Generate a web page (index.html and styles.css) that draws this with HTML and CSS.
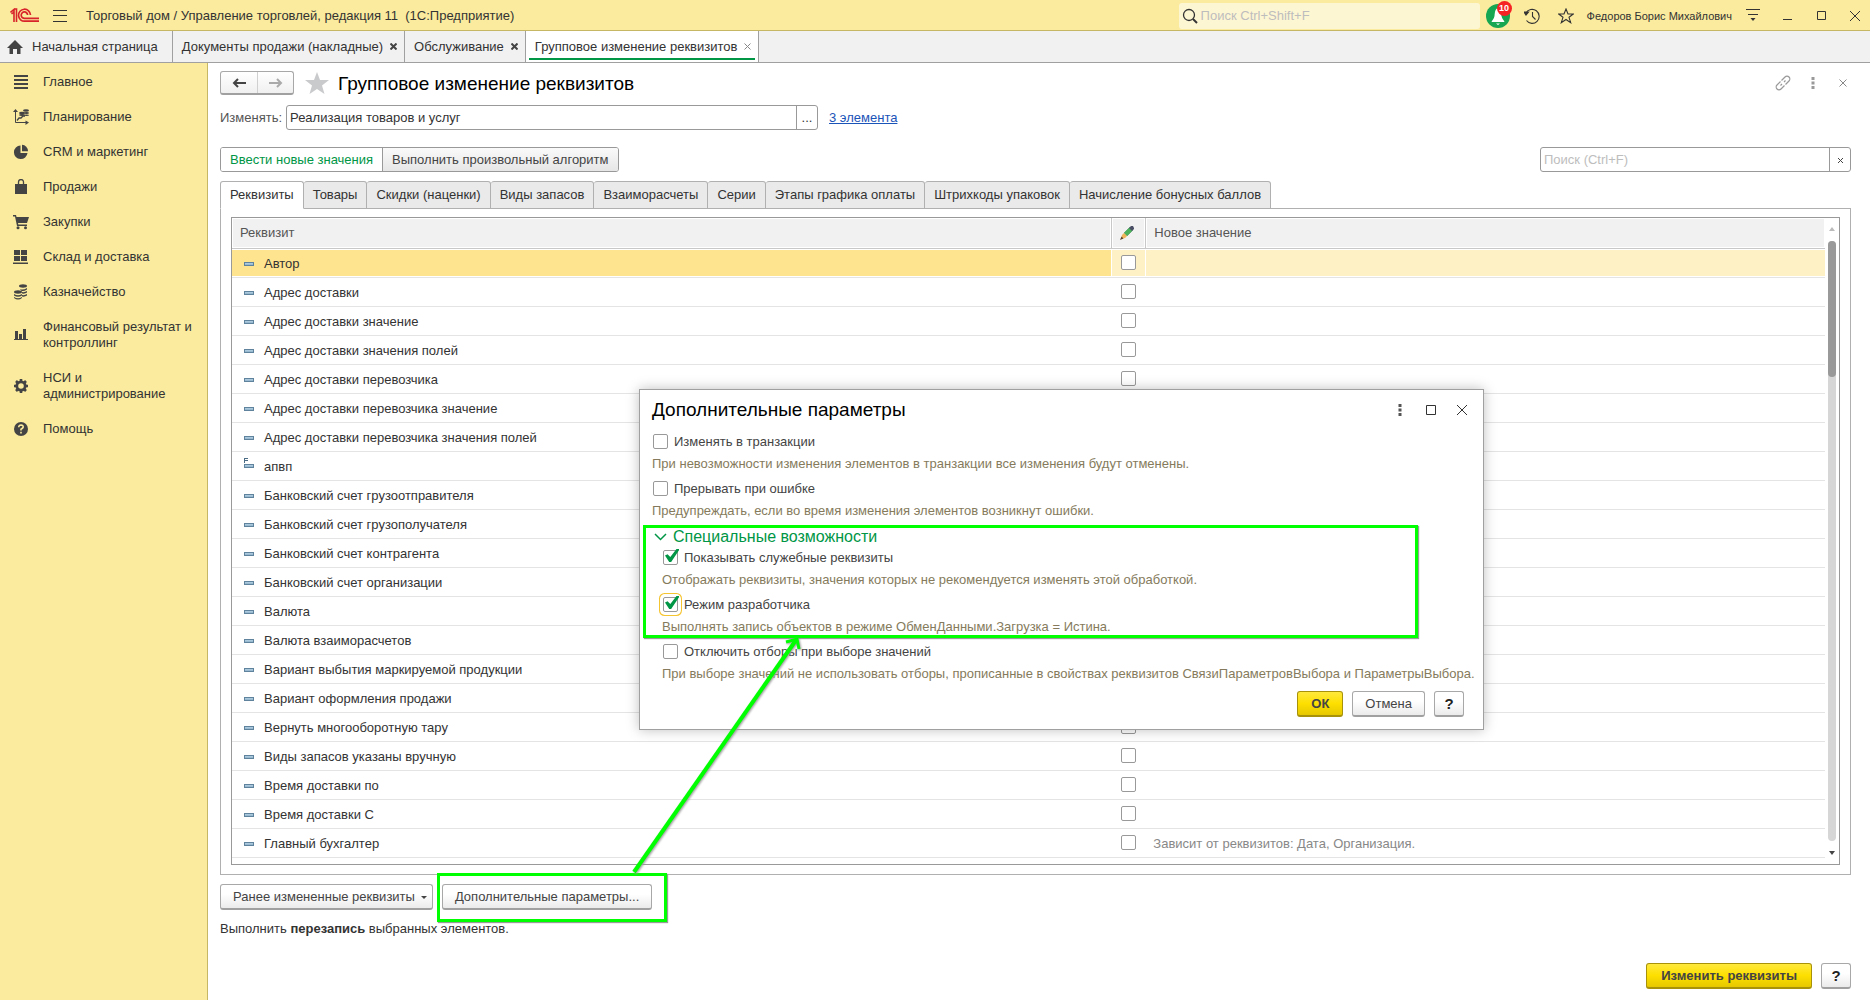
FILE: index.html
```
<!DOCTYPE html>
<html lang="ru">
<head>
    <meta charset="UTF-8">
    <meta name="viewport" content="width=device-width, initial-scale=1.0">
    <title>Групповое изменение реквизитов</title>
    <link rel="stylesheet" href="styles.css">
</head>
<body>
    <header class="topbar">
        <svg class="logo" width="30" height="15" viewBox="0 0 30 15" fill="none" stroke="#d8232a">
            <path d="M0.5 4.5L4 1.5V14M1.5 6L4 4M6.5 14V1H4" stroke-width="1.6"/>
            <path d="M20.5 7A6 6 0 1 0 15 13.2H29" stroke-width="1.7"/>
            <path d="M17.6 7A3.2 3.2 0 1 0 15 10.3H29" stroke-width="1.7"/>
        </svg>
        <button class="icon-btn menu-btn" aria-label="Меню">
            <svg width="14" height="12" viewBox="0 0 14 12" stroke="#333"><path d="M0 .5H14M0 5.5H14M0 11.5H14"/></svg>
        </button>
        <div class="app-title">Торговый дом / Управление торговлей, редакция 11&nbsp; (1С:Предприятие)</div>
        <label class="global-search">
            <svg width="16" height="16" viewBox="0 0 16 16" fill="none" stroke="#333"><circle cx="7" cy="7" r="5.5" stroke-width="1.3"/><path d="M11 11L15 15" stroke-width="2"/></svg>
            <input type="text" placeholder="Поиск Ctrl+Shift+F" aria-label="Поиск">
        </label>
        <button class="icon-btn bell" aria-label="Оповещения">
            <svg width="24" height="24" viewBox="0 0 24 24"><circle cx="12" cy="12" r="12" fill="#17a651"/><path d="M12 4C9 5 9 8 8.500 12C8 15 6 16 5.500 18H18.500C18 16 16 15 15.500 12C15 8 15 5 12 4ZM10 19.500H14L12 21Z" fill="#fff"/></svg>
            <span class="badge">10</span>
        </button>
        <button class="icon-btn history" aria-label="История">
            <svg width="16" height="16" viewBox="0 0 16 16" fill="none" stroke="#333" stroke-width="1.100"><path d="M2 5A7 7 0 1 1 2.500 12.500M8.500 4V8.500L11.500 11.500"/><path d="M0 4L2 7L4.500 4Z" fill="#333"/></svg>
        </button>
        <button class="icon-btn fav" aria-label="Избранное">
            <svg width="16" height="16" viewBox="0 0 16 16" fill="none" stroke="#333" stroke-width="1.100"><path d="M8 1L10 6H15.300L11 9.300L12.700 14.700L8 11.500L3.300 14.700L5 9.300L.7 6H6Z"/></svg>
        </button>
        <span class="user">Федоров Борис Михайлович</span>
        <button class="icon-btn win-menu" aria-label="Сервис">
            <svg width="14" height="13" viewBox="0 0 14 13"><path d="M0 .5H14M2 5.500H12" stroke="#333"/><path d="M4.500 9H9.500L7 12Z" fill="#333"/></svg>
        </button>
        <button class="icon-btn win-min" aria-label="Свернуть">
            <svg width="10" height="10" viewBox="0 0 10 10" stroke="#333"><path d="M0 8.500H9"/></svg>
        </button>
        <button class="icon-btn win-max" aria-label="Развернуть">
            <svg width="10" height="10" viewBox="0 0 10 10" stroke="#333" fill="none"><path d="M.5 .5H8.500V8.500H.5Z"/></svg>
        </button>
        <button class="icon-btn win-close" aria-label="Закрыть">
            <svg width="10" height="10" viewBox="0 0 10 10" stroke="#333"><path d="M0 0L10 10M10 0L0 10"/></svg>
        </button>
    </header>

    <nav class="window-tabs">
        <a class="window-tab home" href="#">
            <svg width="16" height="14" viewBox="0 0 16 14" fill="#444"><path d="M8 0L16 8H13.500V14H10V9H6V14H2.500V8H0Z"/></svg>
            Начальная страница
        </a>
        <a class="window-tab" href="#">Документы продажи (накладные) <svg class="x" viewBox="0 0 7 7"><path d="M.5 .5L6.500 6.500M6.500 .5L.5 6.500"/></svg></a>
        <a class="window-tab" href="#">Обслуживание <svg class="x" viewBox="0 0 7 7"><path d="M.5 .5L6.500 6.500M6.500 .5L.5 6.500"/></svg></a>
        <a class="window-tab active" href="#">Групповое изменение реквизитов <svg class="x" viewBox="0 0 7 7"><path d="M.5 .5L6.500 6.500M6.500 .5L.5 6.500"/></svg></a>
    </nav>

    <div class="workspace">
        <nav class="sidebar">
            <a href="#"><svg viewBox="0 0 16 16"><path d="M1 1H15V3H1ZM1 5H15V7H1ZM1 9H15V11H1ZM1 13H15V15H1Z"/></svg>Главное</a>
            <a href="#"><svg viewBox="0 0 16 16"><path d="M2.500 2V13.500H14" fill="none" stroke="#444"/><path d="M0 3L2.500 0L5 3ZM12.500 11.500L16 13.500L12.500 16Z"/><path d="M4 11.500L6 9H8L10 7H12" fill="none" stroke="#444" stroke-width="1.300"/><ellipse cx="9" cy="4" rx="3" ry="1.300"/><ellipse cx="9" cy="6" rx="3" ry="1"/><ellipse cx="13" cy="1.500" rx="3" ry="1.300"/><ellipse cx="13.500" cy="4" rx="2.500" ry="1"/><ellipse cx="13.500" cy="6.200" rx="2.500" ry=".8"/></svg>Планирование</a>
            <a href="#"><svg viewBox="0 0 16 16"><path d="M7.500 1.500A6.800 6.800 0 1 0 14.500 9H7.500ZM9 .8V7.200H15A6.500 6.500 0 0 0 9 .8Z"/></svg>CRM и маркетинг</a>
            <a href="#"><svg viewBox="0 0 16 16"><path d="M2 5H14V15H2Z"/><path d="M5.500 7V3A2.500 2.500 0 0 1 10.500 3V7" fill="none" stroke="#444" stroke-width="1.300"/></svg>Продажи</a>
            <a href="#"><svg viewBox="0 0 16 16"><path d="M0 1H3L3.500 3H16L14 9H5L5.300 10.500H14V12H4L2 2.500H0Z"/><circle cx="5" cy="13.700" r="1.500"/><circle cx="12.500" cy="13.700" r="1.500"/></svg>Закупки</a>
            <a href="#"><svg viewBox="0 0 16 16"><path d="M1 1H7V6H1ZM8 1H14V6H8ZM1 7H7V12H1ZM8 7H14V12H8ZM0 13.500H15V15H0Z"/></svg>Склад и доставка</a>
            <a href="#"><svg viewBox="0 0 16 16"><ellipse cx="10" cy="2" rx="4" ry="1.700"/><path d="M7 5Q10 6.500 14 4V5.500Q10 8 8 6.500ZM9 8Q12 8.500 14 7V8.500Q12 10 9 9.500ZM9 11Q12 11.500 14 10V11.500Q12 13 9 12.500Z"/><ellipse cx="5" cy="8" rx="4" ry="1.700"/><path d="M1 10Q5 12.500 9 10V11.500Q5 14 1 11.500ZM1 13Q5 15.500 9 13V14Q5 17 1 14Z"/></svg>Казначейство</a>
            <a href="#"><svg viewBox="0 0 16 16"><path d="M2 4H5V12H2ZM6 7H9V12H6ZM10 2H13V12H10ZM1 12H15V13H1Z"/></svg>Финансовый результат и контроллинг</a>
            <a href="#"><svg viewBox="0 0 16 16"><circle cx="8" cy="8" r="4.200" fill="none" stroke="#444" stroke-width="2.800"/><path d="M8 1V4M8 12V15M1 8H4M12 8H15M3 3L5 5M11 11L13 13M13 3L11 5M5 11L3 13" stroke="#444" stroke-width="2.600"/></svg>НСИ и администрирование</a>
            <a href="#"><svg viewBox="0 0 16 16"><circle cx="8" cy="8" r="7"/><path d="M5.700 6.200Q5.900 4 8.100 4Q10.300 4.100 10.200 6Q10 7.200 8 8.200V9.500M8 10.800V12.500" fill="none" stroke="#faeb9e" stroke-width="1.600"/></svg>Помощь</a>
        </nav>

        <main class="form">
            <div class="form-head">
                <div class="nav-buttons">
                    <button aria-label="Назад"><svg width="15" height="12" viewBox="0 0 15 12" stroke="#444" stroke-width="2" fill="none"><path d="M14 6H2M6 2L2 6L6 10"/></svg></button>
                    <button aria-label="Вперед"><svg width="15" height="12" viewBox="0 0 15 12" stroke="#aaa" stroke-width="2" fill="none"><path d="M1 6H13M9 2L13 6L9 10"/></svg></button>
                </div>
                <svg class="star" width="24" height="22" viewBox="0 0 24 22"><path d="M12 0L15 8H24L17 13.500L19.500 22L12 17L4.500 22L7 13.500L0 8H9Z" fill="#c9cacc"/></svg>
                <h1>Групповое изменение реквизитов</h1>
                <div class="form-tools">
                    <button class="icon-btn" aria-label="Ссылка"><svg width="16" height="16" viewBox="0 0 16 16" fill="none" stroke="#999" stroke-width="1.200"><path d="M6.500 5.500L10 2A2.600 2.600 0 0 1 14 6L10.500 9.500M9.500 10.500L6 14A2.600 2.600 0 0 1 2 10L5.500 6.500M5.500 10.500L7 9M9 7L10.500 5.500"/></svg></button>
                    <button class="icon-btn" aria-label="Еще"><svg width="4" height="12" viewBox="0 0 4 12" fill="#999"><path d="M.5 0H3.500V3H.5ZM.5 4.500H3.500V7.500H.5ZM.5 9H3.500V12H.5Z"/></svg></button>
                    <button class="icon-btn" aria-label="Закрыть форму"><svg width="8" height="8" viewBox="0 0 8 8" stroke="#888"><path d="M.5 .5L7.500 7.500M7.500 .5L.5 7.500"/></svg></button>
                </div>
            </div>

            <div class="subject">
                <label for="subject">Изменять:</label>
                <div class="field">
                    <input type="text" id="subject" value="Реализация товаров и услуг">
                    <button aria-label="Выбрать">...</button>
                </div>
                <a href="#">3 элемента</a>
            </div>

            <div class="mode-row">
                <div class="switch">
                    <button class="on">Ввести новые значения</button>
                    <button>Выполнить произвольный алгоритм</button>
                </div>
                <div class="field search">
                    <input type="text" placeholder="Поиск (Ctrl+F)" aria-label="Поиск по реквизитам">
                    <button aria-label="Очистить"><svg class="x" viewBox="0 0 7 7"><path d="M1 1L6 6M6 1L1 6"/></svg></button>
                </div>
            </div>

            <div class="tabs">
                <button class="on">Реквизиты</button>
                <button>Товары</button>
                <button>Скидки (наценки)</button>
                <button>Виды запасов</button>
                <button>Взаиморасчеты</button>
                <button>Серии</button>
                <button>Этапы графика оплаты</button>
                <button>Штрихкоды упаковок</button>
                <button>Начисление бонусных баллов</button>
            </div>

            <div class="panel">
                <div class="grid-frame">
                    <table class="attrs">
                        <thead>
                            <tr>
                                <th class="col-name">Реквизит</th>
                                <th class="col-check"><svg width="14" height="14" viewBox="0 0 14 14"><path d="M4 7L9.500 1.500L12.500 4.500L7 10Z" fill="#4cb35c" stroke="#2f8a46" stroke-width=".5"/><path d="M9 2L11 0H13L14 2V3L12 5Z" fill="#4a4f66"/><path d="M4 7L7 10L5 12L1 13L2 9Z" fill="#f0b45a"/><path d="M0 14L1.500 10.500L3.500 12.500Z" fill="#5b4330"/></svg></th>
                                <th>Новое значение</th>
                            </tr>
                        </thead>
                        <tbody>
                            <tr class="selected"><td>Автор</td><td><input type="checkbox" aria-label="Автор"></td><td></td></tr>
                            <tr><td>Адрес доставки</td><td><input type="checkbox" aria-label="Адрес доставки"></td><td></td></tr>
                            <tr><td>Адрес доставки значение</td><td><input type="checkbox" aria-label="Адрес доставки значение"></td><td></td></tr>
                            <tr><td>Адрес доставки значения полей</td><td><input type="checkbox" aria-label="Адрес доставки значения полей"></td><td></td></tr>
                            <tr><td>Адрес доставки перевозчика</td><td><input type="checkbox" aria-label="Адрес доставки перевозчика"></td><td></td></tr>
                            <tr><td>Адрес доставки перевозчика значение</td><td><input type="checkbox" aria-label="Адрес доставки перевозчика значение"></td><td></td></tr>
                            <tr><td>Адрес доставки перевозчика значения полей</td><td><input type="checkbox" aria-label="Адрес доставки перевозчика значения полей"></td><td></td></tr>
                            <tr class="extra"><td>апвп</td><td><input type="checkbox" aria-label="апвп"></td><td></td></tr>
                            <tr><td>Банковский счет грузоотправителя</td><td><input type="checkbox" aria-label="Банковский счет грузоотправителя"></td><td></td></tr>
                            <tr><td>Банковский счет грузополучателя</td><td><input type="checkbox" aria-label="Банковский счет грузополучателя"></td><td></td></tr>
                            <tr><td>Банковский счет контрагента</td><td><input type="checkbox" aria-label="Банковский счет контрагента"></td><td></td></tr>
                            <tr><td>Банковский счет организации</td><td><input type="checkbox" aria-label="Банковский счет организации"></td><td></td></tr>
                            <tr><td>Валюта</td><td><input type="checkbox" aria-label="Валюта"></td><td></td></tr>
                            <tr><td>Валюта взаиморасчетов</td><td><input type="checkbox" aria-label="Валюта взаиморасчетов"></td><td></td></tr>
                            <tr><td>Вариант выбытия маркируемой продукции</td><td><input type="checkbox" aria-label="Вариант выбытия маркируемой продукции"></td><td></td></tr>
                            <tr><td>Вариант оформления продажи</td><td><input type="checkbox" aria-label="Вариант оформления продажи"></td><td></td></tr>
                            <tr><td>Вернуть многооборотную тару</td><td><input type="checkbox" aria-label="Вернуть многооборотную тару"></td><td></td></tr>
                            <tr><td>Виды запасов указаны вручную</td><td><input type="checkbox" aria-label="Виды запасов указаны вручную"></td><td></td></tr>
                            <tr><td>Время доставки по</td><td><input type="checkbox" aria-label="Время доставки по"></td><td></td></tr>
                            <tr><td>Время доставки С</td><td><input type="checkbox" aria-label="Время доставки С"></td><td></td></tr>
                            <tr><td>Главный бухгалтер</td><td><input type="checkbox" aria-label="Главный бухгалтер"></td><td class="depends">Зависит от реквизитов: Дата, Организация.</td></tr>
                        </tbody>
                    </table>
                    <div class="scrollbar">
                        <div class="arrow up"></div>
                        <div class="track"><div class="thumb"></div></div>
                        <div class="arrow down"></div>
                    </div>
                </div>
            </div>

            <div class="actions">
                <button class="btn dropdown">Ранее измененные реквизиты</button>
                <div class="highlighted">
                    <button class="btn">Дополнительные параметры...</button>
                </div>
            </div>
            <p class="note">Выполнить <b>перезапись</b> выбранных элементов.</p>

            <footer class="form-footer">
                <button class="btn primary">Изменить реквизиты</button>
                <button class="btn help">?</button>
            </footer>
        </main>
    </div>

    <section class="dialog" role="dialog" aria-labelledby="dialog-title">
        <div class="dialog-head">
            <h2 id="dialog-title">Дополнительные параметры</h2>
            <button class="icon-btn" aria-label="Еще"><svg width="4" height="12" viewBox="0 0 4 12" fill="#555"><path d="M.5 0H3.500V3H.5ZM.5 4.500H3.500V7.500H.5ZM.5 9H3.500V12H.5Z"/></svg></button>
            <button class="icon-btn" aria-label="Развернуть"><svg width="10" height="10" viewBox="0 0 10 10" stroke="#333" fill="none"><path d="M.5 .5H9.500V9.500H.5Z"/></svg></button>
            <button class="icon-btn" aria-label="Закрыть"><svg width="12" height="12" viewBox="0 0 12 12" stroke="#333"><path d="M1 1L11 11M11 1L1 11"/></svg></button>
        </div>
        <label class="option"><input type="checkbox">Изменять в транзакции</label>
        <p class="hint">При невозможности изменения элементов в транзакции все изменения будут отменены.</p>
        <label class="option"><input type="checkbox">Прерывать при ошибке</label>
        <p class="hint">Предупреждать, если во время изменения элементов возникнут ошибки.</p>
        <button class="group-title">
            <svg width="13" height="8" viewBox="0 0 13 8" fill="none" stroke="#009646" stroke-width="1.500"><path d="M1 1L6.500 6.500L12 1"/></svg>
            Специальные возможности
        </button>
        <div class="group">
            <label class="option"><input type="checkbox" checked>Показывать служебные реквизиты</label>
            <p class="hint">Отображать реквизиты, значения которых не рекомендуется изменять этой обработкой.</p>
            <label class="option"><input type="checkbox" class="focused" checked>Режим разработчика</label>
            <p class="hint">Выполнять запись объектов в режиме ОбменДанными.Загрузка = Истина.</p>
            <label class="option"><input type="checkbox">Отключить отборы при выборе значений</label>
            <p class="hint">При выборе значений не использовать отборы, прописанные в свойствах реквизитов СвязиПараметровВыбора и ПараметрыВыбора.</p>
        </div>
        <div class="dialog-buttons">
            <button class="btn primary">ОК</button>
            <button class="btn">Отмена</button>
            <button class="btn help">?</button>
        </div>
        <div class="group-mark"></div>
    </section>

    <svg class="pointer" width="170" height="240" viewBox="0 0 170 240" fill="none" stroke="#00ff00" stroke-width="3">
        <path d="M3 235L165 3" stroke-width="4"/>
        <path d="M155 5L166 2L168 12"/>
    </svg>
</body>
</html>
```
FILE: styles.css
```
* {
    box-sizing: border-box;
}
body {
    font-family: "Liberation Sans", Arial, sans-serif;
    font-size: 13px;
    line-height: 16px;
    color: #333;
    background-color: #fff;
    margin: 0;
    min-height: 100vh;
    display: flex;
    flex-direction: column;
    position: relative;
}
button, input {
    font: inherit;
    color: inherit;
    margin: 0;
}
button {
    cursor: pointer;
}
a {
    color: inherit;
    text-decoration: none;
}
h1, h2, p {
    margin: 0;
}
h1, h2 {
    font-size: 19px;
    line-height: 24px;
    font-weight: normal;
    color: #000;
}
svg {
    flex: none;
}
.icon-btn {
    display: flex;
    align-items: center;
    justify-content: center;
    background: none;
    border: none;
    padding: 0;
}
.x {
    width: 7px;
    height: 7px;
    stroke: #444;
    stroke-width: 2;
}

/* top bar */
.topbar {
    display: flex;
    align-items: center;
    height: 31px;
    padding: 1px 10px 0;
    background-color: #faeb9e;
    border-bottom: 1px solid #c5b763;
}
.menu-btn {
    margin: 0 19px 0 13px;
}
.app-title {
    flex: 1;
}
.global-search {
    display: flex;
    align-items: center;
    gap: 3px;
    width: 301px;
    height: 26px;
    padding-left: 3px;
    background-color: #fdf6d3;
    border-radius: 3px;
}
.global-search input {
    flex: 1;
    background: none;
    border: none;
    outline: none;
    padding: 0;
}
::placeholder {
    color: #bdbdbd;
    opacity: 1;
}
.bell {
    position: relative;
    margin: 0 14px 0 6px;
}
.badge {
    position: absolute;
    top: -3px;
    right: -2px;
    width: 15px;
    height: 15px;
    border-radius: 50%;
    background-color: #f52323;
    color: #fff;
    font-size: 9px;
    line-height: 15px;
    font-weight: bold;
    text-align: center;
}
.history {
    margin-right: 18px;
}
.user {
    font-size: 11px;
    margin: 0 14px 0 13px;
}
.win-min {
    margin: 0 24px 0 23px;
}
.win-close {
    margin-left: 23px;
}

/* open windows */
.window-tabs {
    display: flex;
    height: 32px;
    background-color: #f1f1f1;
    border-bottom: 1px solid #a0a0a0;
}
.window-tab {
    display: flex;
    align-items: center;
    gap: 7px;
    padding: 0 7px 0 9px;
    border-right: 1px solid #a0a0a0;
}
.window-tab.home {
    gap: 9px;
    padding: 0 14px 0 7px;
}
.window-tab.active {
    position: relative;
    background-color: #fff;
}
.window-tab.active::after {
    content: "";
    position: absolute;
    left: 3px;
    right: 3px;
    bottom: 2px;
    height: 2px;
    background-color: #009646;
}
.window-tab.active .x {
    stroke: #888;
    stroke-width: 1;
}

/* sections */
.workspace {
    flex: 1;
    display: flex;
}
.sidebar {
    flex: none;
    width: 208px;
    padding-top: 2px;
    background-color: #faeb9e;
    border-right: 1px solid #c5b763;
}
.sidebar a {
    display: flex;
    align-items: center;
    gap: 14px;
    padding: 9px 10px 10px 13px;
}
.sidebar svg {
    width: 16px;
    height: 16px;
    fill: #444;
}

/* form */
.form {
    flex: 1;
    min-width: 0;
    display: flex;
    flex-direction: column;
    padding: 8px 19px 11px 12px;
}
.form-head {
    display: flex;
    align-items: center;
    height: 24px;
}
.form-head h1 {
    padding-top: 2px;
}
.nav-buttons {
    display: flex;
    border: 1px solid #a8a8a8;
    border-bottom: 2px solid #a0a0a0;
    border-radius: 3px;
    background: linear-gradient(#fff, #f0f0f0);
}
.nav-buttons button {
    width: 36px;
    height: 21px;
    padding: 0;
    border: none;
    background: none;
    display: flex;
    align-items: center;
    justify-content: center;
}
.nav-buttons button + button {
    border-left: 1px solid #d0d0d0;
}
.star {
    margin: 0 9px 0 11px;
}
.form-tools {
    display: flex;
    align-items: center;
    gap: 14px;
    margin-left: auto;
}
.form-tools .icon-btn {
    width: 16px;
}
.subject {
    display: flex;
    align-items: center;
    margin-top: 10px;
}
.subject label {
    color: #555;
    margin-right: 4px;
}
.subject a {
    margin-left: 11px;
    color: #1b54b8;
    text-decoration: underline;
}
.field {
    display: flex;
    width: 532px;
    height: 25px;
    border: 1px solid #999;
    border-radius: 3px;
    background-color: #fff;
}
.field input {
    flex: 1;
    min-width: 0;
    border: none;
    outline: none;
    background: none;
    padding: 0 3px;
}
.field button {
    width: 21px;
    padding: 0;
    border: none;
    border-left: 1px solid #999;
    background: none;
}
.field .x {
    stroke-width: 1;
}
.field.search {
    width: 311px;
}
.mode-row {
    display: flex;
    justify-content: space-between;
    margin-top: 17px;
}
.switch {
    display: flex;
    height: 25px;
    border: 1px solid #999;
    border-radius: 3px;
    overflow: hidden;
}
.switch button {
    padding: 0 9px;
    border: none;
    color: #444;
    background: linear-gradient(#fafafa, #e6e6e6);
}
.switch button + button {
    border-left: 1px solid #999;
}
.switch .on {
    color: #009646;
    background: #fff;
}

/* pages */
.tabs {
    position: relative;
    display: flex;
    margin-top: 9px;
    margin-bottom: -1px;
}
.tabs button {
    height: 28px;
    padding: 0 9px;
    border: 1px solid #b0b0b0;
    border-left: none;
    border-radius: 3px 3px 0 0;
    background-color: #eaeaea;
}
.tabs .on {
    border-left: 1px solid #b0b0b0;
    border-bottom-color: #fff;
    background-color: #fff;
}
.panel {
    padding: 8px 10px 9px;
    border: 1px solid #b0b0b0;
}
.grid-frame {
    display: flex;
    padding-bottom: 6px;
    border: 1px solid #999;
}
.attrs {
    flex: 1;
    table-layout: fixed;
    border-collapse: separate;
    border-spacing: 0;
}
.attrs th {
    height: 31px;
    padding: 0 8px;
    text-align: left;
    font-weight: normal;
    color: #555;
    background-color: #f1f1f1;
    border-bottom: 1px solid #c8c8c8;
    box-shadow: inset 0 0 0 1px #fff;
}
.attrs th + th {
    border-left: 1px solid #c8c8c8;
}
.attrs .col-name {
    width: 55.2%;
}
.attrs .col-check {
    width: 34px;
}
.attrs th svg, .attrs input {
    display: block;
}
.attrs td {
    height: 29px;
    padding: 1px 8px 0;
    border-bottom: 1px solid #e4e4e4;
}
.attrs td:first-child {
    padding-left: 32px;
    background:
        linear-gradient(#b4d0e2, #8fb2c9) 13px 14px / 8px 2px no-repeat,
        linear-gradient(#5f829d, #5f829d) 12px 13px / 10px 4px no-repeat;
}
.attrs .extra td:first-child {
    background:
        linear-gradient(#4c6b85, #4c6b85) 12px 6px / 4px 1px no-repeat,
        linear-gradient(#4c6b85, #4c6b85) 12px 6px / 1px 5px no-repeat,
        linear-gradient(#4c6b85, #4c6b85) 12px 8px / 4px 1px no-repeat,
        linear-gradient(#b4d0e2, #8fb2c9) 13px 13px / 8px 2px no-repeat,
        linear-gradient(#5f829d, #5f829d) 12px 12px / 10px 4px no-repeat;
}
.attrs td:nth-child(2) {
    padding: 0 8px 2px 10px;
}
.attrs .selected td {
    background-color: #fdf1c5;
    box-shadow: inset 0 1px #fff, inset 1px 0 #fff, inset 0 -1px #fff;
}
.attrs .selected td:first-child {
    background-color: #ffe48f;
    box-shadow: inset 0 1px #fff, inset 0 -1px #fff;
}
.attrs .depends {
    color: #888;
}
.scrollbar {
    width: 14px;
    display: flex;
    flex-direction: column;
    align-items: center;
    gap: 10px;
    padding: 9px 0 3px;
}
.arrow {
    border: 3px solid transparent;
}
.arrow.up {
    border-top: none;
    border-bottom: 4px solid #bbb;
}
.arrow.down {
    border-bottom: none;
    border-top: 4px solid #444;
}
.track {
    flex: 1;
    width: 8px;
    border-radius: 4px;
    background-color: #d6d6d6;
}
.thumb {
    height: 136px;
    border-radius: 4px;
    background-color: #999;
}

/* check boxes */
input[type="checkbox"] {
    appearance: none;
    position: relative;
    flex: none;
    width: 15px;
    height: 15px;
    border: 1px solid #999;
    border-radius: 2px;
    background-color: #fff;
}
input[type="checkbox"]:checked::after {
    content: "";
    position: absolute;
    left: 1px;
    top: -2px;
    width: 14px;
    height: 13px;
    background-color: #009646;
    clip-path: polygon(0 50%, 18% 40%, 38% 62%, 82% 0, 100% 0, 100% 10%, 44% 100%, 30% 100%);
}
input.focused {
    box-shadow: 0 0 0 3px #fff, 0 0 0 4px #f5c431;
}

/* buttons */
.btn {
    height: 26px;
    padding: 1px 12px 0;
    color: #444;
    border: 1px solid #a8a8a8;
    border-bottom: 2px solid #a0a0a0;
    border-radius: 3px;
    background: linear-gradient(#fff 40%, #ebebeb);
}
.btn.primary {
    padding: 0 13px;
    font-weight: bold;
    border-color: #a8920a;
    background: linear-gradient(#ffe93d, #fddf00 50%, #e6c800);
}
.btn.help {
    width: 30px;
    padding: 0;
    font-size: 15px;
    font-weight: bold;
    color: #222;
}
.btn.dropdown {
    display: flex;
    align-items: center;
    gap: 6px;
    padding-right: 5px;
}
.btn.dropdown::after {
    content: "";
    border: 3px solid transparent;
    border-top-color: #444;
    border-bottom: none;
}
.actions {
    display: flex;
    gap: 9px;
    margin-top: 9px;
}
.highlighted {
    position: relative;
}
.highlighted::after {
    content: "";
    position: absolute;
    inset: -11px -15px -12px -5px;
    border: 3px solid #00ff00;
    box-shadow: 1px 1px 1px #999;
    pointer-events: none;
}
.note {
    margin-top: 11px;
}
.form-footer {
    display: flex;
    justify-content: flex-end;
    gap: 9px;
    margin-top: auto;
}
.form-footer .primary {
    padding: 0 14px;
}

/* dialog */
.dialog {
    position: absolute;
    left: 639px;
    top: 389px;
    width: 845px;
    padding: 8px 12px 12px;
    background-color: #fff;
    border: 1px solid #a0a0a0;
    box-shadow: 0 0 12px rgba(0, 0, 0, 0.25);
}
.dialog-head {
    display: flex;
    align-items: center;
    gap: 13px;
    margin-bottom: 10px;
}
.dialog-head h2 {
    flex: 1;
}
.dialog-head .icon-btn {
    width: 18px;
}
.option {
    display: flex;
    align-items: center;
    gap: 6px;
    height: 19px;
    padding-left: 1px;
    color: #444;
}
.hint {
    margin: 5px 0 7px;
    color: #857b5c;
    white-space: nowrap;
}
.group-title {
    display: flex;
    align-items: center;
    gap: 6px;
    height: 18px;
    margin-top: 9px;
    padding: 0 0 0 2px;
    border: none;
    background: none;
    font-size: 16px;
    color: #009646;
}
.group {
    padding: 2px 0 0 10px;
}
.group .hint:last-child {
    margin-bottom: 9px;
}
.dialog-buttons {
    display: flex;
    justify-content: flex-end;
    gap: 9px;
    padding-right: 7px;
}
.group-mark {
    position: absolute;
    left: 3px;
    top: 135px;
    width: 775px;
    height: 113px;
    border: 3px solid #00ff00;
    box-shadow: 1px 1px 1px #999;
    pointer-events: none;
}
.pointer {
    position: absolute;
    left: 631px;
    top: 637px;
    filter: drop-shadow(1px 1px 1px #999);
    pointer-events: none;
}
```
